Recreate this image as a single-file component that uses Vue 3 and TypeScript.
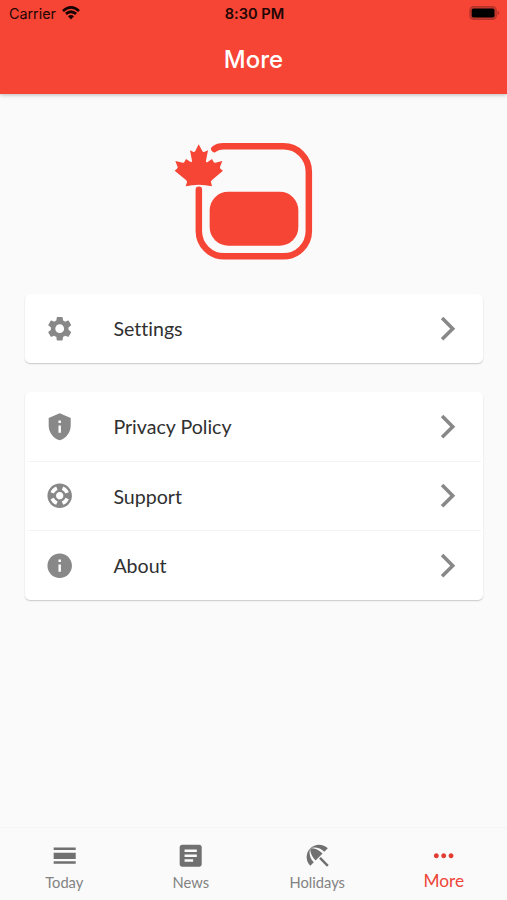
<script setup lang="ts">
interface MenuItem {
  label: string
  path: string
}

interface Tab extends MenuItem {
  active?: boolean
}

const settings: MenuItem = {
  label: 'Settings',
  path: 'M19.14 12.94c.04-.3.06-.61.06-.94 0-.32-.02-.64-.07-.94l2.03-1.58c.18-.14.23-.41.12-.61l-1.92-3.32c-.12-.22-.37-.29-.59-.22l-2.39.96c-.5-.38-1.03-.7-1.62-.94l-.36-2.54c-.04-.24-.24-.41-.48-.41h-3.84c-.24 0-.43.17-.47.41l-.36 2.54c-.59.24-1.13.57-1.62.94l-2.39-.96c-.22-.08-.47 0-.59.22L2.74 8.87c-.12.21-.08.47.12.61l2.03 1.58c-.05.3-.09.63-.09.94s.02.64.07.94l-2.03 1.58c-.18.14-.23.41-.12.61l1.92 3.32c.12.22.37.29.59.22l2.39-.96c.5.38 1.03.7 1.62.94l.36 2.54c.05.24.24.41.48.41h3.84c.24 0 .44-.17.47-.41l.36-2.54c.59-.24 1.13-.56 1.62-.94l2.39.96c.22.08.47 0 .59-.22l1.92-3.32c.12-.22.07-.47-.12-.61l-2.01-1.58zM12 15.6c-1.98 0-3.6-1.62-3.6-3.6s1.62-3.6 3.6-3.6 3.6 1.62 3.6 3.6-1.62 3.6-3.6 3.6z',
}

const privacy: MenuItem = {
  label: 'Privacy Policy',
  path: 'M12 1 3 5v6c0 5.55 3.84 10.74 9 12 5.16-1.26 9-6.45 9-12V5l-9-4zm-1 6h2v2h-2V7zm0 4h2v6h-2v-6z',
}

const support: MenuItem = {
  label: 'Support',
  path: 'M12 2C6.48 2 2 6.48 2 12s4.48 10 10 10 10-4.48 10-10S17.52 2 12 2zm7.46 7.12-2.78 1.15c-.51-1.36-1.58-2.44-2.95-2.94l1.15-2.78c2.1.8 3.77 2.47 4.58 4.57zM12 15c-1.66 0-3-1.34-3-3s1.34-3 3-3 3 1.34 3 3-1.34 3-3 3zM9.13 4.54l1.17 2.78c-1.38.5-2.47 1.59-2.98 2.97L4.54 9.13c.81-2.11 2.48-3.78 4.59-4.59zM4.54 14.87l2.78-1.15c.51 1.38 1.59 2.46 2.97 2.96l-1.17 2.78c-2.1-.81-3.77-2.48-4.58-4.59zm10.34 4.59-1.15-2.78c1.37-.51 2.45-1.59 2.95-2.97l2.78 1.17c-.81 2.1-2.48 3.77-4.58 4.58z',
}

const about: MenuItem = {
  label: 'About',
  path: 'M12 2C6.48 2 2 6.48 2 12s4.48 10 10 10 10-4.48 10-10S17.52 2 12 2zm1 15h-2v-6h2v6zm0-8h-2V7h2v2z',
}

const groups: MenuItem[][] = [[settings], [privacy, support, about]]

const tabs: Tab[] = [
  { label: 'Today', path: 'M3 5.4h18v2H3zM3 9.6h18v5H3zM3 16.6h18v2H3z' },
  {
    label: 'News',
    path: 'M19 3H5c-1.1 0-2 .9-2 2v14c0 1.1.9 2 2 2h14c1.1 0 2-.9 2-2V5c0-1.1-.9-2-2-2zm-5 14H7v-2h7v2zm3-4H7v-2h10v2zm0-4H7V7h10v2z',
  },
  {
    label: 'Holidays',
    path: 'M13.127 14.56l1.43-1.43 6.44 6.443L19.57 21zm4.293-5.73l2.86-2.86c-3.95-3.95-10.35-3.96-14.3-.02 3.93-1.3 8.31-.25 11.44 2.88zM5.95 5.98c-3.94 3.95-3.93 10.35.02 14.3l2.86-2.86C5.7 14.29 4.65 9.91 5.95 5.98zm.02-.02l-.01.01c-.38 3.01 1.17 6.88 4.3 10.02l5.73-5.73c-3.13-3.13-7.01-4.68-10.02-4.3z',
  },
  {
    label: 'More',
    path: 'M6 10c-1.1 0-2 .9-2 2s.9 2 2 2 2-.9 2-2-.9-2-2-2zm12 0c-1.1 0-2 .9-2 2s.9 2 2 2 2-.9 2-2-.9-2-2-2zm-6 0c-1.1 0-2 .9-2 2s.9 2 2 2 2-.9 2-2-.9-2-2-2z',
    active: true,
  },
]
</script>

<template>
  <div class="screen">
    <header class="header">
      <div class="status">
        <div class="carrier">
          <span>Carrier</span>
          <svg class="wifi" viewBox="0 0 18 14">
            <path d="M1 4.9Q9-2 17 4.9" />
            <path d="M3.9 7.9Q9 3.6 14.1 7.9" />
            <path class="solid" d="M6 10.2Q9 7.8 12 10.2L9 13.5z" />
          </svg>
        </div>
        <div class="time">8:30 PM</div>
        <svg class="battery" viewBox="0 0 31 14">
          <rect class="shell" x=".9" y=".6" width="26.4" height="12.8" rx="4" />
          <rect x="2.7" y="2.4" width="22.800" height="9.2" rx="1.8" />
          <path class="cap" d="M28.6 4.8q1.8.6 1.8 2.2t-1.8 2.2z" />
        </svg>
      </div>
      <h1 class="title">More</h1>
    </header>

    <main class="content">
      <svg class="logo" viewBox="0 0 480 420">
        <path class="frame" d="M148 57Q158 49 176 49H355A76 76 0 0 1 431.500 125V303A76 76 0 0 1 355 379H178A76 76 0 0 1 101.500 303V179" />
        <rect x="134" y="185" width="266" height="162" rx="56" />
        <path d="M101 43L91 63Q88 67 84 65L75 61L81 92Q81 99 76 95L63 87L58 96Q57 99 53 98L31 93L38 111Q39 114 35 117L29 122L62 149Q67 153 66 157L62 169Q101 160 141 169L138 157Q137 153 142 149L174 122L167 117Q164 114 165 111L172 93L151 98Q147 99 146 96L141 87L128 96Q122 99 123 92L129 61L119 65Q114 67 112 63z" />
      </svg>

      <section v-for="(group, index) in groups" :key="index" class="card">
        <div v-for="item in group" :key="item.label" class="row">
          <svg class="icon" viewBox="0 0 24 24"><path :d="item.path" /></svg>
          <span class="label">{{ item.label }}</span>
          <svg class="icon" viewBox="0 0 24 24">
            <path class="chevron" d="M6.6 3.3L15.300 12L6.6 20.700" />
          </svg>
        </div>
      </section>
    </main>

    <nav class="tabs">
      <div v-for="tab in tabs" :key="tab.label" class="tab" :class="{ active: tab.active }">
        <svg class="icon" viewBox="0 0 24 24"><path :d="tab.path" /></svg>
        <span class="caption">{{ tab.label }}</span>
      </div>
    </nav>
  </div>
</template>

<style>
body {
  margin: 0;
  background: #fafafa;
}
</style>

<style scoped>
.screen {
  display: flex;
  flex-direction: column;
  height: 900px;
  background: #fafafa;
  font-family: Lato, sans-serif;
  font-variant-ligatures: none;
}

.header {
  flex: none;
  height: 94px;
  background: #f64435;
  box-shadow: 0 1px 4px rgba(0, 0, 0, 0.26);
  font-family: Inter, sans-serif;
}

.status {
  display: grid;
  grid-template-columns: 1fr auto 1fr;
  align-items: center;
  height: 27px;
  padding: 0 7px 0 9px;
  color: #210604;
  font-size: 14.3px;
}

.carrier {
  display: flex;
  align-items: center;
  gap: 6px;
}

.wifi {
  width: 18px;
  height: 14px;
  margin-top: -2px;
  fill: none;
  stroke: #160302;
  stroke-width: 2.7;
}

.wifi .solid {
  fill: #160302;
  stroke: none;
}

.time {
  font-size: 14.6px;
  font-weight: 600;
}

.battery {
  justify-self: end;
  width: 31px;
  height: 14px;
  margin-top: -1px;
}

.battery .shell {
  fill: #c9382c;
  stroke: #b5332a;
  stroke-width: 1.2;
}

.battery .cap {
  fill: #b5332a;
}

.title {
  margin: 0;
  height: 66px;
  color: #fff;
  font-size: 24px;
  font-weight: 500;
  line-height: 66px;
  text-align: center;
}

.content {
  flex: 1;
  display: flex;
  flex-direction: column;
  padding: 36px 24px 0 25px;
}

.logo {
  width: 160px;
  height: 140px;
  margin: 0 0 24px 140px;
  fill: #f64435;
}

.logo .frame {
  fill: none;
  stroke: #f64435;
  stroke-width: 19.500;
  stroke-linecap: round;
}

.card {
  margin-bottom: 29.4px;
  border-radius: 5px;
  background: #fff;
  box-shadow: 0 1px 1.5px rgba(0, 0, 0, 0.2);
}

.row {
  display: flex;
  align-items: center;
  box-sizing: border-box;
  height: 68.6px;
  padding: 0 18px;
  margin: 0 2px;
}

.row + .row {
  height: 69.6px;
  border-top: 1px solid #f4f4f4;
}

.icon {
  flex: none;
  width: 29.4px;
  height: 29.4px;
  fill: #888;
}

.chevron {
  fill: none;
  stroke: #888;
  stroke-width: 2.9;
}

.label {
  flex: 1;
  padding: 2px 0 0 39px;
  color: #303030;
  font-size: 19.6px;
  line-height: 26px;
}

.tabs {
  flex: none;
  display: grid;
  grid-template-columns: repeat(4, 1fr);
  height: 72px;
  padding-left: 1px;
  background: #fafafa;
  box-shadow: 0 -1px 1px rgba(0, 0, 0, 0.015);
}

.tab {
  display: flex;
  flex-direction: column;
  align-items: center;
  padding-top: 13px;
  color: #828282;
}

.tab .icon {
  fill: #707070;
}

.caption {
  height: 22px;
  margin-top: 1px;
  font-size: 14.7px;
  line-height: 22px;
}

.tab.active {
  color: #ee4538;
}

.tab.active .icon {
  fill: #e23b31;
}

.tab.active .caption {
  margin-top: 0;
  font-size: 17.3px;
}
</style>
